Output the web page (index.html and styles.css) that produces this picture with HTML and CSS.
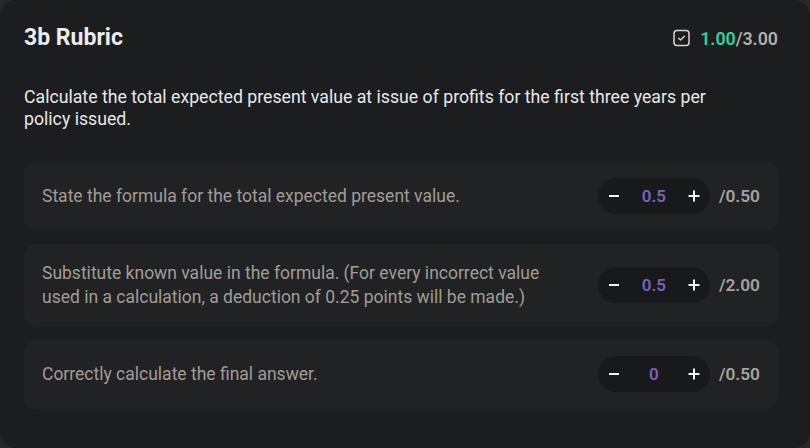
FILE: index.html
```html
<!DOCTYPE html>
<html lang="en">
<head>
<meta charset="utf-8">
<title>3b Rubric</title>
<link rel="stylesheet" href="styles.css">
</head>
<body>
<section class="card">
  <header class="card-head">
    <h2 class="title">3b Rubric</h2>
    <div class="score">
      <svg class="check-icon" width="17" height="18" viewBox="0 0 17 18" aria-hidden="true">
        <rect x="1" y="1.5" width="15" height="15" rx="3" fill="none" stroke="#d8d6d2" stroke-width="1.5"/>
        <path d="M5.6 9.2 L7.6 11 L11.4 7.2" fill="none" stroke="#d8d6d2" stroke-width="1.4" stroke-linecap="round" stroke-linejoin="round"/>
      </svg>
      <span class="got">1.00</span><span class="total">/3.00</span>
    </div>
  </header>
  <p class="desc">Calculate the total expected present value at issue of profits for the first three years per policy issued.</p>
  <div class="rows">
    <div class="row">
      <p class="row-text">State the formula for the total expected present value.</p>
      <div class="ctrl">
        <div class="stepper">
          <button class="btn" aria-label="decrease"><svg width="12" height="12" viewBox="0 0 12 12"><path d="M1 6 H11" stroke="#f2f2f2" stroke-width="2"/></svg></button>
          <span class="val">0.5</span>
          <button class="btn" aria-label="increase"><svg width="12" height="12" viewBox="0 0 12 12"><path d="M0.5 6 H11.5 M6 0.5 V11.5" stroke="#f2f2f2" stroke-width="2"/></svg></button>
        </div>
        <span class="max">/0.50</span>
      </div>
    </div>
    <div class="row">
      <p class="row-text">Substitute known value in the formula. (For every incorrect value used in a calculation, a deduction of 0.25 points will be made.)</p>
      <div class="ctrl">
        <div class="stepper">
          <button class="btn" aria-label="decrease"><svg width="12" height="12" viewBox="0 0 12 12"><path d="M1 6 H11" stroke="#f2f2f2" stroke-width="2"/></svg></button>
          <span class="val">0.5</span>
          <button class="btn" aria-label="increase"><svg width="12" height="12" viewBox="0 0 12 12"><path d="M0.5 6 H11.5 M6 0.5 V11.5" stroke="#f2f2f2" stroke-width="2"/></svg></button>
        </div>
        <span class="max">/2.00</span>
      </div>
    </div>
    <div class="row">
      <p class="row-text">Correctly calculate the final answer.</p>
      <div class="ctrl">
        <div class="stepper">
          <button class="btn" aria-label="decrease"><svg width="12" height="12" viewBox="0 0 12 12"><path d="M1 6 H11" stroke="#f2f2f2" stroke-width="2"/></svg></button>
          <span class="val">0</span>
          <button class="btn" aria-label="increase"><svg width="12" height="12" viewBox="0 0 12 12"><path d="M0.5 6 H11.5 M6 0.5 V11.5" stroke="#f2f2f2" stroke-width="2"/></svg></button>
        </div>
        <span class="max">/0.50</span>
      </div>
    </div>
  </div>
</section>
</body>
</html>
```

FILE: styles.css
```css
* { box-sizing: border-box; }
html, body {
  margin: 0;
  padding: 0;
  background: #27282b;
  font-family: Roboto, "Noto Sans", sans-serif;
}
.card {
  height: 448px;
  background: #1c1d1f;
  border-radius: 16px;
  padding: 24px 32px 0 24px;
}
.card-head {
  display: flex;
  align-items: center;
  justify-content: space-between;
  height: 28px;
}
.title {
  margin: 0;
  font-size: 23px;
  font-weight: 700;
  color: #ececec;
  line-height: 28px;
}
.score {
  display: flex;
  align-items: center;
  font-size: 17.8px;
  font-weight: 600;
}
.check-icon { margin-right: 10px; }
.got { color: #2fd29f; }
.total { color: #b3aea6; }
.desc {
  margin: 34px 0 0 0;
  max-width: 720px;
  font-size: 17.7px;
  line-height: 22px;
  color: #e8e8e8;
}
.rows {
  margin-top: 31px;
  display: flex;
  flex-direction: column;
  gap: 13px;
}
.row {
  display: flex;
  align-items: center;
  justify-content: space-between;
  padding: 17px 18px;
  background: #212224;
  border-radius: 12px;
}
.row-text {
  margin: 0;
  max-width: 520px;
  font-size: 17.5px;
  line-height: 24px;
  color: #a29d95;
}
.ctrl {
  display: flex;
  align-items: center;
  gap: 9px;
}
.stepper {
  display: flex;
  align-items: center;
  width: 112px;
  height: 36px;
  border-radius: 18px;
  background: #18191b;
}
.btn {
  width: 32px;
  height: 36px;
  padding: 0;
  border: 0;
  background: transparent;
  display: flex;
  align-items: center;
  justify-content: center;
}
.val {
  flex: 1;
  text-align: center;
  font-size: 17px;
  font-weight: 600;
  color: #7864bb;
}
.max {
  font-size: 17.3px;
  font-weight: 600;
  color: #a8a39b;
}
```
